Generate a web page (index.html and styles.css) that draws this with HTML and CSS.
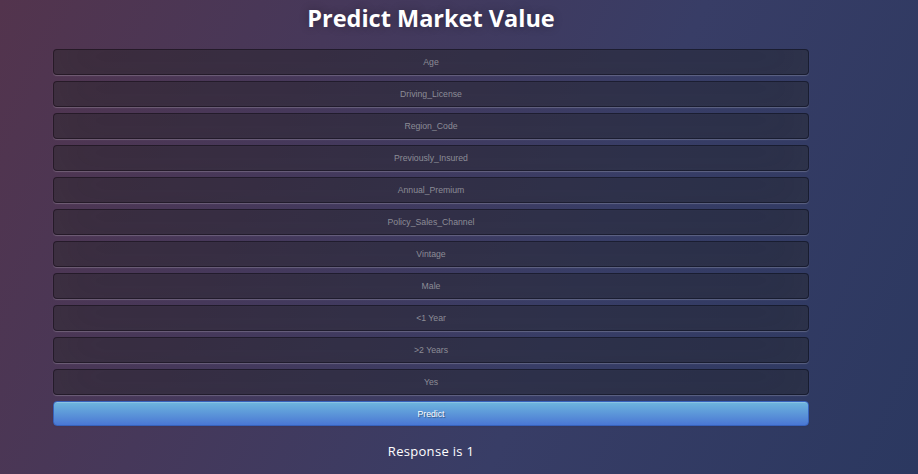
FILE: index.html
```html
<!DOCTYPE html>
<html>
<head>
<meta charset="utf-8">
<title>Predict Market Value</title>
<link rel="stylesheet" href="styles.css">
</head>
<body>
<div class="page">
  <h1 class="title">Predict Market Value</h1>
  <form class="form">
    <input class="field" type="text" placeholder="Age">
    <input class="field" type="text" placeholder="Driving_License">
    <input class="field" type="text" placeholder="Region_Code">
    <input class="field" type="text" placeholder="Previously_Insured">
    <input class="field" type="text" placeholder="Annual_Premium">
    <input class="field" type="text" placeholder="Policy_Sales_Channel">
    <input class="field" type="text" placeholder="Vintage">
    <input class="field" type="text" placeholder="Male">
    <input class="field" type="text" placeholder="&lt;1 Year">
    <input class="field" type="text" placeholder="&gt;2 Years">
    <input class="field" type="text" placeholder="Yes">
    <button class="btn" type="button">Predict</button>
  </form>
  <p class="result">Response is 1</p>
</div>
</body>
</html>
```
FILE: styles.css
```css
* { box-sizing: border-box; }
html, body { margin: 0; height: 100%; }
body {
  width: 918px;
  height: 474px;
  overflow: hidden;
  background:
    linear-gradient(115deg, #53344d 0%, #46385a 30%, #383d66 62%, #2b3860 100%);
  font-family: "Open Sans", sans-serif;
}
.page {
  padding: 0 109px 0 53px;
  display: flex;
  flex-direction: column;
  align-items: stretch;
}
.title {
  margin: 0;
  height: 49px;
  padding-top: 1px;
  text-align: center;
  color: #fff;
  font-size: 23.5px;
  font-weight: 700;
  line-height: 34px;
  text-shadow: 0 0 10px rgba(0,0,0,0.3);
}
.form {
  display: flex;
  flex-direction: column;
  gap: 6px;
}
.field {
  height: 26px;
  width: 100%;
  margin: 0;
  padding: 0 10px;
  background: rgba(0,0,0,0.3);
  border: 1px solid rgba(0,0,0,0.3);
  border-radius: 4px;
  outline: none;
  color: #fff;
  font-family: "Liberation Sans", Arial, sans-serif;
  font-size: 8.7px;
  text-align: center;
  box-shadow: inset 0 -5px 45px rgba(100,100,100,0.2), 0 1px 1px rgba(255,255,255,0.2);
}
.field::placeholder { color: #8c8c96; }
.btn {
  height: 25px;
  width: 100%;
  margin: 0;
  padding: 0;
  border: 1px solid #3762bc;
  border-radius: 4px;
  background: linear-gradient(to bottom, #6eb6de, #4a77d4);
  color: #fff;
  font-family: "Liberation Sans", Arial, sans-serif;
  font-size: 8.7px;
  text-shadow: 1px 1px 1px rgba(0,0,0,0.4);
  box-shadow: inset 0 1px 0 rgba(255,255,255,0.2), 0 1px 2px rgba(0,0,0,0.05);
}
.result {
  margin: 16px 0 0;
  text-align: center;
  color: #fff;
  font-size: 13px;
  line-height: 18px;
  letter-spacing: 0.3px;
}
```
